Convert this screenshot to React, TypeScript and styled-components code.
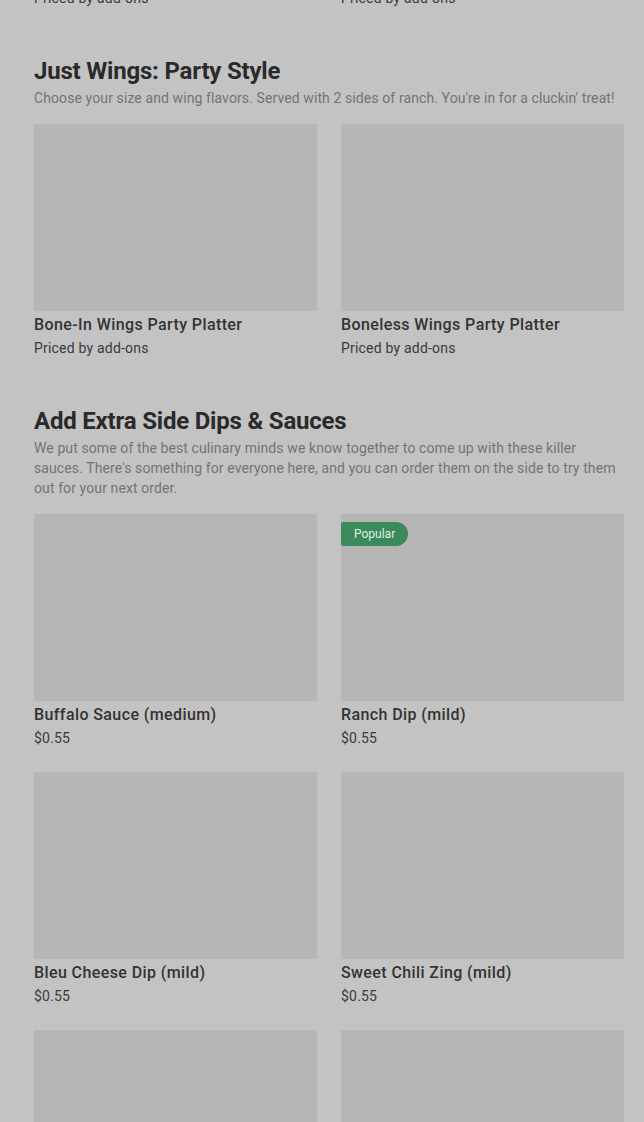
import React from 'react';
import styled, { createGlobalStyle } from 'styled-components';

const GlobalStyle = createGlobalStyle`
  html, body {
    margin: 0;
    padding: 0;
    background: #c3c3c3;
    overflow: hidden;
  }
  body {
    font-family: Roboto, "Liberation Sans", sans-serif;
  }
`;

const Page = styled.div`
  display: flex;
  flex-direction: column;
  gap: 47px;
  padding: 0 20px 0 34px;
  height: 1122px;
  overflow: hidden;
`;

const Section = styled.section`
  display: flex;
  flex-direction: column;
`;

const Title = styled.h2`
  margin: 0;
  font-family: Roboto, "Liberation Sans", sans-serif;
  font-size: 24px;
  line-height: 32px;
  font-weight: 700;
  letter-spacing: -0.2px;
  color: #2a2a2a;
`;

const Description = styled.p`
  margin: 1px 0 16px;
  font-size: 14px;
  line-height: 20px;
  letter-spacing: 0.1px;
  color: #737373;
`;

const Grid = styled.div`
  display: grid;
  grid-template-columns: 1fr 1fr;
  gap: 24px;
`;

const TopRow = styled(Grid)`
  margin-top: -15px;
`;

const Card = styled.div`
  display: flex;
  flex-direction: column;
`;

const Thumb = styled.div`
  position: relative;
  height: 187px;
  background: #b6b6b6;
`;

const Badge = styled.span`
  position: absolute;
  top: 8px;
  left: 0;
  height: 24px;
  padding: 0 13px;
  display: flex;
  align-items: center;
  background: #3b8a5c;
  color: #dfeee4;
  font-size: 12px;
  border-radius: 2px 12px 12px 2px;
`;

const Name = styled.div`
  margin-top: 4px;
  font-size: 16px;
  line-height: 20px;
  font-weight: 500;
  letter-spacing: 0.4px;
  color: #333333;
`;

const Price = styled.div`
  margin-top: 3px;
  font-size: 14px;
  line-height: 20px;
  letter-spacing: 0.2px;
  color: #3a3a3a;
`;

type Item = { name: string; price: string; popular?: boolean };

const ItemCard: React.FC<{ item: Item }> = ({ item }) => (
  <Card>
    <Thumb>{item.popular && <Badge>Popular</Badge>}</Thumb>
    <Name>{item.name}</Name>
    <Price>{item.price}</Price>
  </Card>
);

const wings: Item[] = [
  { name: 'Bone-In Wings Party Platter', price: 'Priced by add-ons' },
  { name: 'Boneless Wings Party Platter', price: 'Priced by add-ons' },
];

const dips: Item[] = [
  { name: 'Buffalo Sauce (medium)', price: '$0.55' },
  { name: 'Ranch Dip (mild)', price: '$0.55', popular: true },
  { name: 'Bleu Cheese Dip (mild)', price: '$0.55' },
  { name: 'Sweet Chili Zing (mild)', price: '$0.55' },
  { name: 'Honey Mustard Dip', price: '$0.55' },
  { name: 'Cajun Dip', price: '$0.55' },
];

export default function App() {
  return (
    <>
      <GlobalStyle />
      <Page>
        <TopRow>
          <Price>Priced by add-ons</Price>
          <Price>Priced by add-ons</Price>
        </TopRow>
        <Section>
          <Title>Just Wings: Party Style</Title>
          <Description>
            Choose your size and wing flavors. Served with 2 sides of ranch. You're in for a cluckin' treat!
          </Description>
          <Grid>
            {wings.map((w) => (
              <ItemCard key={w.name} item={w} />
            ))}
          </Grid>
        </Section>
        <Section>
          <Title>Add Extra Side Dips &amp; Sauces</Title>
          <Description>
            We put some of the best culinary minds we know together to come up with these killer sauces. There's
            something for everyone here, and you can order them on the side to try them out for your next order.
          </Description>
          <Grid>
            {dips.map((d) => (
              <ItemCard key={d.name} item={d} />
            ))}
          </Grid>
        </Section>
      </Page>
    </>
  );
}
